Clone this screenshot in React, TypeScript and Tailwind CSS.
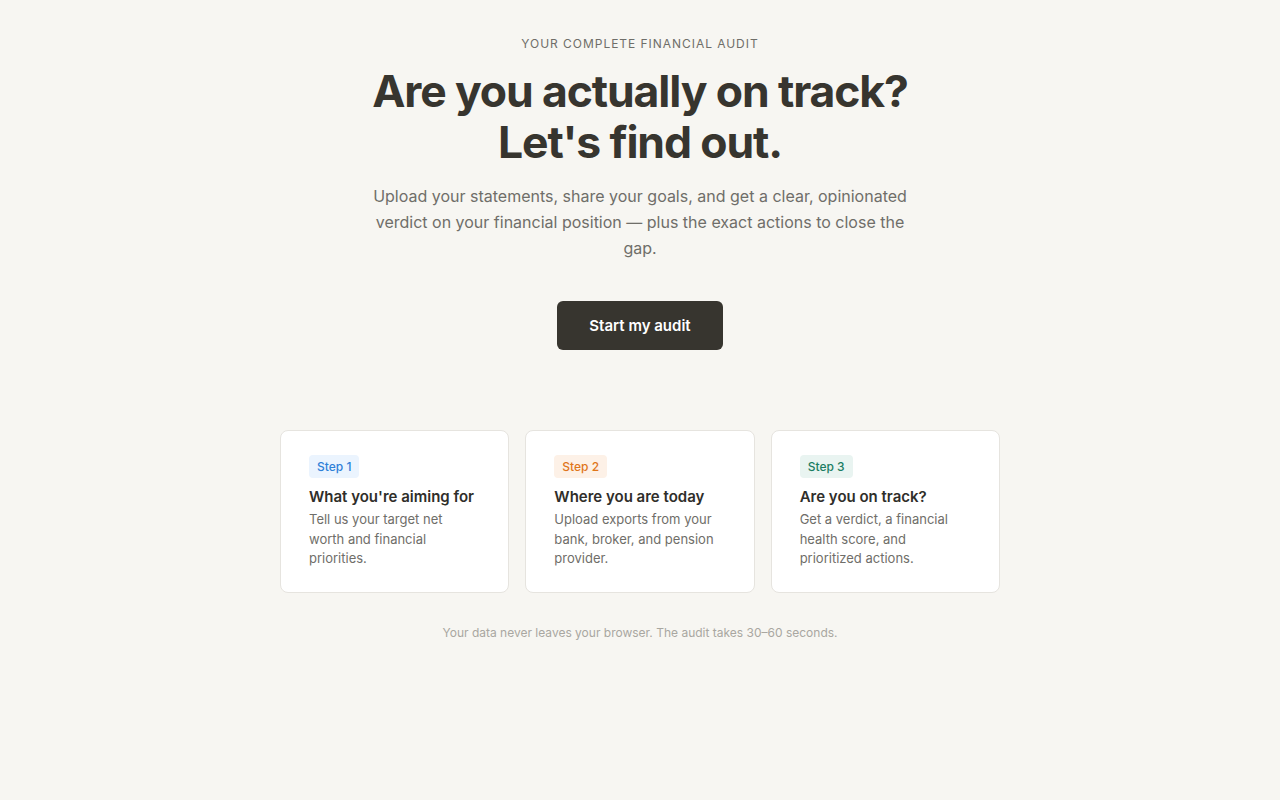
const steps = [
  {
    label: 'Step 1',
    badge: 'bg-[#ebf4fe] text-[#2f80d8]',
    title: "What you're aiming for",
    body: 'Tell us your target net worth and financial priorities.',
  },
  {
    label: 'Step 2',
    badge: 'bg-[#fdf1e7] text-[#e0761a]',
    title: 'Where you are today',
    body: 'Upload exports from your bank, broker, and pension provider.',
  },
  {
    label: 'Step 3',
    badge: 'bg-[#e9f4f1] text-[#1b7d63]',
    title: 'Are you on track?',
    body: 'Get a verdict, a financial health score, and prioritized actions.',
  },
];

export default function App() {
  return (
    <div
      className="min-h-screen bg-[#f7f6f2] text-[#37352f]"
      style={{ fontFamily: 'Inter, "Noto Sans", sans-serif' }}
    >
      <div className="mx-auto flex max-w-[720px] flex-col items-center pt-[36px] text-center">
        <p className="text-[12px] uppercase leading-4 tracking-[0.08em] text-[#6f6e69]">
          Your complete financial audit
        </p>
        <h1 className="mt-[14px] text-[44.5px] font-bold leading-[1.14] tracking-[-0.025em]">
          Are you actually on track?
          <br />
          Let's find out.
        </h1>
        <p className="mt-[17px] max-w-[540px] text-[16px] leading-[25.6px] text-[#6f6e69]">
          Upload your statements, share your goals, and get a clear, opinionated
          verdict on your financial position — plus the exact actions to close the gap.
        </p>
        <button className="mt-[40px] h-[49px] rounded-md bg-[#37352f] px-8 pt-px text-[15px] font-semibold text-white">
          Start my audit
        </button>

        <div className="mt-[80px] grid w-full grid-cols-3 gap-4 text-left">
          {steps.map((s) => (
            <div
              key={s.label}
              className="flex flex-col items-start rounded-lg border border-[#e6e4df] bg-white px-7 pb-[23px] pt-6"
            >
              <span className={`rounded px-2 py-[3px] text-[12px] font-medium leading-[17px] ${s.badge}`}>
                {s.label}
              </span>
              <h3 className="mt-[8px] text-[15px] font-semibold leading-[22px] text-[#2f2e2a]">
                {s.title}
              </h3>
              <p className="mt-[2px] text-[13px] leading-[19.5px] text-[#6f6e69]">{s.body}</p>
            </div>
          ))}
        </div>

        <p className="mt-8 text-[12px] leading-4 text-[#a9a7a1]">
          Your data never leaves your browser. The audit takes 30–60 seconds.
        </p>
      </div>
    </div>
  );
}
